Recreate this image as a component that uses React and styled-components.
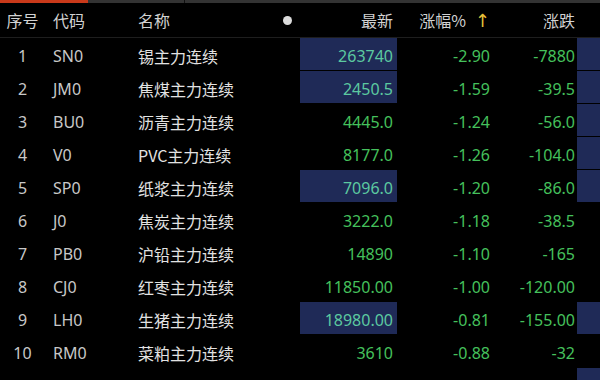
import React from "react";
import styled, { createGlobalStyle } from "styled-components";

const Global = createGlobalStyle`
  html, body { margin: 0; padding: 0; background: #000; overflow: hidden; }
  body { font-family: "Noto Sans", "Noto Sans CJK SC", sans-serif; }
`;

const Page = styled.div`
  width: 600px;
  height: 380px;
  background: #000;
  overflow: hidden;
`;

const TabStrip = styled.div`
  display: flex;
  height: 4px;
  align-items: flex-start;
`;

const Tab = styled.div`
  height: 3px;
  width: ${(p) => (p.$w ? `${p.$w}px` : "auto")};
  flex: ${(p) => (p.$w ? "none" : "1")};
  background: ${(p) => (p.$active ? "#c9391a" : "#333333")};
  border-left: ${(p) => (p.$sep ? "1px solid #111" : "none")};
`;

const cols = "45px 85px 148px 22px 97px 94px 86px 1fr";

const HeaderRow = styled.div`
  display: grid;
  grid-template-columns: ${cols};
  height: 33px;
  align-items: center;
  border-bottom: 1px solid #1e1e1e;
  font-size: 16px;
  color: #d2d2d2;
  font-family: "Noto Sans CJK SC", sans-serif;
`;

const Row = styled.div`
  display: grid;
  grid-template-columns: ${cols};
  height: 33px;
  font-size: 16px;
`;

const Cell = styled.div`
  display: flex;
  align-items: center;
  justify-content: ${(p) =>
    p.$align === "center" ? "center" : p.$align === "right" ? "flex-end" : "flex-start"};
  padding-left: ${(p) => p.$pl || 0}px;
  padding-right: ${(p) => p.$pr || 0}px;
  padding-top: ${(p) => (p.$head ? 0 : 3)}px;
  margin-bottom: 1px;
  color: ${(p) => p.$color || "#cfcfcf"};
  background: ${(p) => (p.$hl ? "#1f2a57" : "transparent")};
  white-space: nowrap;
  overflow: hidden;
`;

const NameText = styled.span`
  font-family: "Noto Sans CJK SC", sans-serif;
  color: #e2e2e2;
`;

const Dot = styled.span`
  width: 9px;
  height: 9px;
  border-radius: 50%;
  background: #dcdcdc;
  margin-right: 4px;
`;

const Arrow = styled.span`
  color: #e8c23a;
  margin-left: 9px;
  font-size: 18px;
  font-family: "DejaVu Sans", sans-serif;
`;

const GREEN = "#45c15c";
const HLTEXT = "#5cc9a0";
const HEAD = "#d2d2d2";

const data = [
  ["1", "SN0", "锡主力连续", "263740", "-2.90", "-7880", true, true],
  ["2", "JM0", "焦煤主力连续", "2450.5", "-1.59", "-39.5", true, true],
  ["3", "BU0", "沥青主力连续", "4445.0", "-1.24", "-56.0", false, true],
  ["4", "V0", "PVC主力连续", "8177.0", "-1.26", "-104.0", false, true],
  ["5", "SP0", "纸浆主力连续", "7096.0", "-1.20", "-86.0", true, true],
  ["6", "J0", "焦炭主力连续", "3222.0", "-1.18", "-38.5", false, false],
  ["7", "PB0", "沪铅主力连续", "14890", "-1.10", "-165", false, false],
  ["8", "CJ0", "红枣主力连续", "11850.00", "-1.00", "-120.00", false, false],
  ["9", "LH0", "生猪主力连续", "18980.00", "-0.81", "-155.00", true, true],
  ["10", "RM0", "菜粕主力连续", "3610", "-0.88", "-32", false, false],
];

export default function App() {
  return (
    <Page>
      <Global />
      <TabStrip>
        <Tab $w={88} $active />
        <Tab $w={96} />
        <Tab $sep />
      </TabStrip>
      <HeaderRow>
        <Cell $head $align="center" $color={HEAD}>序号</Cell>
        <Cell $head $pl={8} $color={HEAD}>代码</Cell>
        <Cell $head $pl={8} $color={HEAD}>名称</Cell>
        <Cell $head $align="center"><Dot /></Cell>
        <Cell $head $align="right" $pr={4} $color={HEAD}>最新</Cell>
        <Cell $head $align="right" $pr={1} $color={HEAD}>涨幅%<Arrow>↑</Arrow></Cell>
        <Cell $head $align="right" $pr={2} $color={HEAD}>涨跌</Cell>
        <Cell $head />
      </HeaderRow>
      {data.map(([idx, code, name, last, pct, chg, hl, hlR]) => (
        <Row key={idx}>
          <Cell $align="center" $color="#c8c8c8">{idx}</Cell>
          <Cell $pl={8} $color="#c8c8c8">{code}</Cell>
          <Cell $pl={8}><NameText>{name}</NameText></Cell>
          <Cell />
          <Cell $align="right" $pr={4} $hl={hl} $color={hl ? HLTEXT : GREEN}>{last}</Cell>
          <Cell $align="right" $pr={1} $color={GREEN}>{pct}</Cell>
          <Cell $align="right" $pr={2} $color={GREEN}>{chg}</Cell>
          <Cell $hl={hlR} />
        </Row>
      ))}
      <Row>
        <Cell />
        <Cell />
        <Cell />
        <Cell />
        <Cell />
        <Cell />
        <Cell />
        <Cell $hl />
      </Row>
    </Page>
  );
}
